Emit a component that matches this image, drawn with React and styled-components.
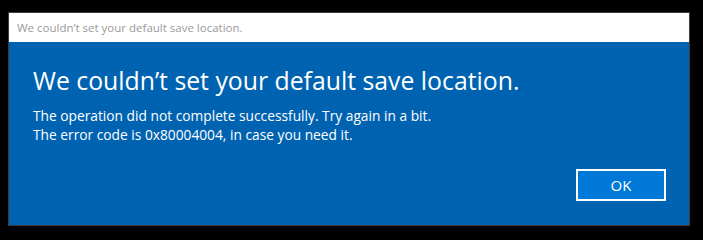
import styled, { createGlobalStyle } from "styled-components";

const Global = createGlobalStyle`
  html, body {
    margin: 0;
    background: #000000;
  }
  body {
    font-family: "Open Sans", "Noto Sans", sans-serif;
  }
`;

const Frame = styled.div`
  width: 682px;
  margin: 12px 0 0 8px;
  border: 1px solid #3c3c3c;
  box-sizing: border-box;
`;

const TitleBar = styled.div`
  height: 29px;
  background: #ffffff;
  color: #9a9a9a;
  font-size: 11.5px;
  padding-left: 8px;
  display: flex;
  align-items: center;
`;

const Body = styled.div`
  height: 183px;
  background: #0063b1;
  color: #ffffff;
  padding: 22px 24px 0 24px;
  box-sizing: border-box;
  display: flex;
  flex-direction: column;
`;

const Heading = styled.h1`
  margin: 0;
  font-size: 24.8px;
  font-weight: 400;
  line-height: 32px;
`;

const Message = styled.p`
  margin: 10px 0 0 0;
  font-size: 13.75px;
  line-height: 19px;
`;

const Actions = styled.div`
  margin-top: auto;
  margin-bottom: 24px;
  display: flex;
  justify-content: flex-end;
`;

const OkButton = styled.button`
  width: 90px;
  height: 32px;
  margin-right: -1px;
  background: #0078d7;
  border: 2px solid #ffffff;
  color: #ffffff;
  font-family: inherit;
  font-size: 15px;
  padding: 0;
`;

function App() {
  return (
    <>
      <Global />
      <Frame>
        <TitleBar>We couldn’t set your default save location.</TitleBar>
        <Body>
          <Heading>We couldn’t set your default save location.</Heading>
          <Message>
            The operation did not complete successfully. Try again in a bit.
            <br />
            The error code is 0x80004004, in case you need it.
          </Message>
          <Actions>
            <OkButton>OK</OkButton>
          </Actions>
        </Body>
      </Frame>
    </>
  );
}

export default App;
